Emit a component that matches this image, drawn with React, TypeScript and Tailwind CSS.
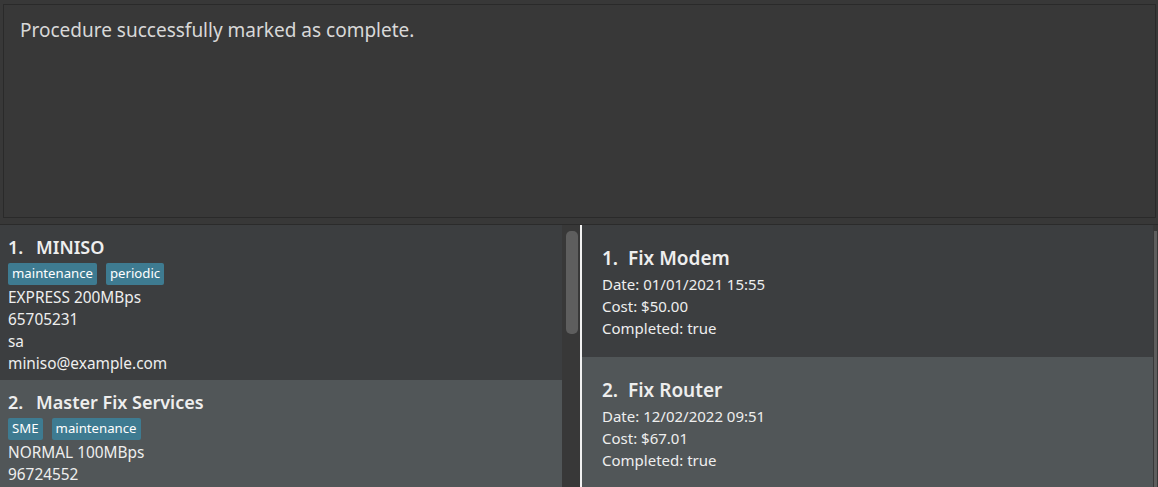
import React from "react";

const font = { fontFamily: '"Segoe UI", "Noto Sans", "Open Sans", sans-serif' };

function Tag({ children }: { children: React.ReactNode }) {
  return (
    <span className="inline-flex items-center h-[22px] px-[4px] rounded-[2px] bg-[#3e7b91] text-white text-[13.2px] leading-none">
      {children}
    </span>
  );
}

function Title({ n, name, size, nw }: { n: string; name: string; size: string; nw: string }) {
  return (
    <div className={`${size} font-semibold flex`}>
      <span className={nw}>{n}</span>
      <span>{name}</span>
    </div>
  );
}

export default function App() {
  return (
    <div className="w-[1158px] h-[487px] bg-[#383838] overflow-hidden flex flex-col text-[#eeeeee]" style={font}>
      <div className="h-[224px] pt-[4px] pl-[3px] pr-[2px] pb-[6px] flex">
        <div className="flex-1 border border-[#2a2a2a] pl-[16px] pt-[11px]">
          <div className="text-[19px] text-[#d8d8d8] leading-[28px]">Procedure successfully marked as complete.</div>
        </div>
      </div>
      <div className="flex-1 flex border-t border-[#2b2b2b] min-h-0">
        <div className="w-[562px] flex flex-col">
          <div className="h-[155px] bg-[#3c3e40] pl-[8px] pt-[8px]">
            <Title n="1." name="MINISO" size="text-[18px] leading-[28px]" nw="w-[28px]" />
            <div className="flex gap-[9px] mt-[2px]">
              <Tag>maintenance</Tag>
              <Tag>periodic</Tag>
            </div>
            <div className="text-[15.4px] leading-[22px] mt-[2px]">EXPRESS 200MBps</div>
            <div className="text-[15.4px] leading-[22px]">65705231</div>
            <div className="text-[15.4px] leading-[22px]">sa</div>
            <div className="text-[15.4px] leading-[22px]">miniso@example.com</div>
          </div>
          <div className="flex-1 bg-[#515658] pl-[8px] pt-[8px]">
            <Title n="2." name="Master Fix Services" size="text-[18px] leading-[28px]" nw="w-[28px]" />
            <div className="flex gap-[9px] mt-[2px]">
              <Tag>SME</Tag>
              <Tag>maintenance</Tag>
            </div>
            <div className="text-[15.4px] leading-[22px] mt-[2px]">NORMAL 100MBps</div>
            <div className="text-[15.4px] leading-[22px]">96724552</div>
          </div>
        </div>
        <div className="w-[18px] bg-[#383838] pt-[6px] pl-[4px] pr-[2px]">
          <div className="h-[103px] rounded-[5px] bg-[#5e5e5e]" />
        </div>
        <div className="w-[2px] bg-[#f2f2f2]" />
        <div className="flex-1 flex flex-col">
          <div className="h-[132px] bg-[#3c3e40] pl-[20px] pt-[19px]">
            <Title n="1." name="Fix Modem" size="text-[19px] leading-[28px]" nw="w-[26px]" />
            <div className="text-[15px] leading-[22px] mt-[1px]">Date: 01/01/2021 15:55</div>
            <div className="text-[15px] leading-[22px]">Cost: $50.00</div>
            <div className="text-[15px] leading-[22px]">Completed: true</div>
          </div>
          <div className="flex-1 bg-[#515658] pl-[20px] pt-[19px]">
            <Title n="2." name="Fix Router" size="text-[19px] leading-[28px]" nw="w-[26px]" />
            <div className="text-[15px] leading-[22px] mt-[1px]">Date: 12/02/2022 09:51</div>
            <div className="text-[15px] leading-[22px]">Cost: $67.01</div>
            <div className="text-[15px] leading-[22px]">Completed: true</div>
          </div>
        </div>
        <div className="w-[5px] bg-[#383838] pt-[6px] pl-[1px]">
          <div className="h-[300px] w-[3px] bg-[#5e5e5e]" />
        </div>
      </div>
    </div>
  );
}
